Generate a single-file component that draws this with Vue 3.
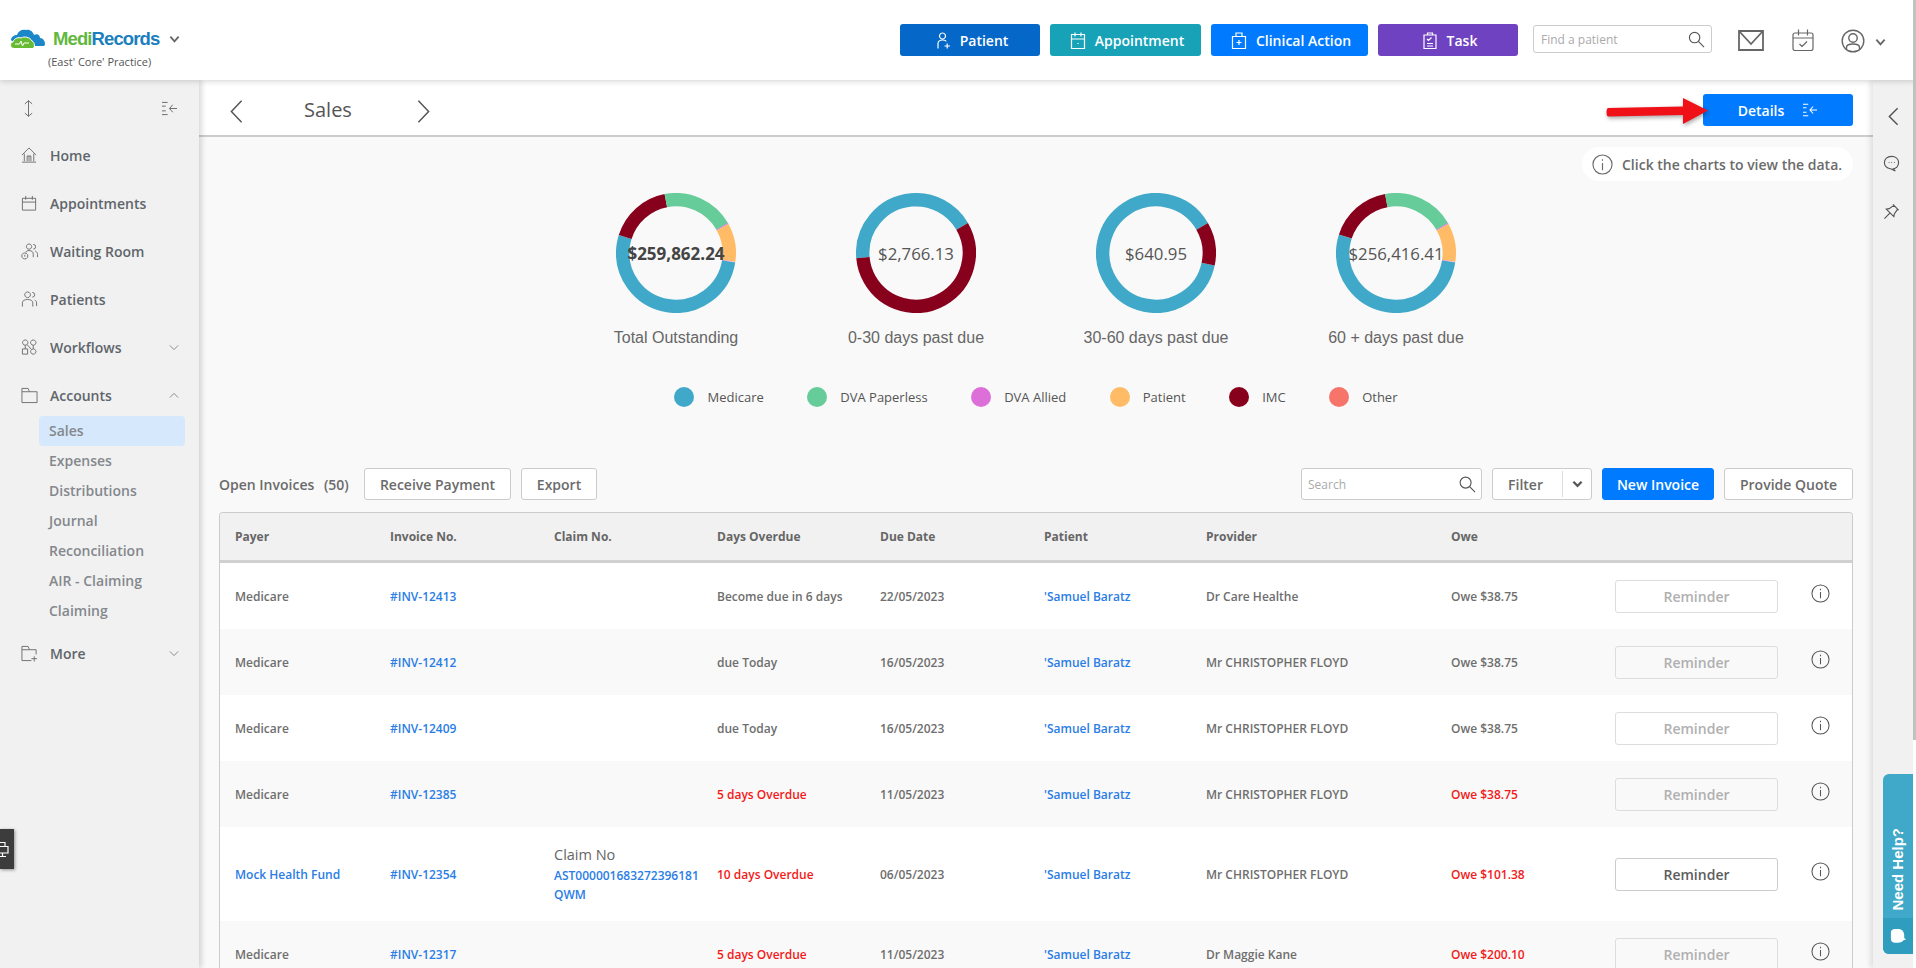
<script setup>
const nav = [
  { label: 'Home', d: 'M1 8.500 8.500 1 16 8.500M3.500 7V15M13.500 7V15M1 16H16M6.500 15V9.500H10.500V15M8.500 9.500V15' },
  { label: 'Appointments', d: 'M1.500 3.500H15.500V16H1.500ZM1.500 7.500H15.500M5 1V5M12 1V5' },
  { label: 'Waiting Room', d: 'M8.500 1a2.800 2.800 0 1 1-.01 0M13 1.500a2.500 2.500 0 0 1 0 5M5 10C5.500 8.500 7 8 8.500 8 11.500 8 13 9.500 13 12V15M15 8.500C16.500 9 17.500 10.500 17.500 12V15M4 10.500a3.200 3.200 0 1 1-.01 0M4 12.500V14.500' },
  { label: 'Patients', d: 'M7 1a3 3 0 1 1-.01 0M12 1.500a2.500 2.500 0 0 1 0 5M1.500 16.500V12.500C1.500 10 4 9 7 9S12.500 10 12.500 12.500V16.500M14.500 9.500C15.500 10 16.500 11 16.500 12.500V16' },
  { label: 'Workflows', d: 'M4.500 1a2.800 2.800 0 1 1-.01 0M13 1a2.800 2.800 0 1 1-.01 0M1.500 10.500H7V16H1.500ZM13 10.500a2.800 2.800 0 1 1-.01 0M4.500 6.600V10.500M13 6.600V10.500M6.500 6 11 11', chevron: 'down' },
  { label: 'Accounts', d: 'M1 16.500V1.500H7.500L9 5H17V16.500ZM1 5H9', chevron: 'up' },
]
const subnav = ['Sales', 'Expenses', 'Distributions', 'Journal', 'Reconciliation', 'AIR - Claiming', 'Claiming']

function segs(list) {
  return list.map(([from, to, color]) => ({ len: to - from, rot: from - 90, color }))
}
const blue = '#40a8c8', red = '#87001c', green = '#66cc99', orange = '#ffbb66', pink = '#dd70d8'
const charts = [
  { value: '$259,862.24', label: 'Total Outstanding', bold: true, segs: segs([[99, 287.5, blue], [287.5, 349, red], [349, 420, green], [60, 61, pink], [61, 98.500, orange], [98.500, 99, pink]]) },
  { value: '$2,766.13', label: '0-30 days past due', segs: segs([[265, 420, blue], [60, 265, red]]) },
  { value: '$640.95', label: '30-60 days past due', segs: segs([[102, 420, blue], [60, 102, red]]) },
  { value: '$256,416.41', label: '60 + days past due', segs: segs([[99, 288, blue], [288, 349.500, red], [349.500, 420, green], [60, 61, pink], [61, 98.500, orange], [98.500, 99, pink]]) },
]
const legend = [
  ['Medicare', blue], ['DVA Paperless', green], ['DVA Allied', pink],
  ['Patient', orange], ['IMC', red], ['Other', '#f6746a'],
]
const cols = ['Payer', 'Invoice No.', 'Claim No.', 'Days Overdue', 'Due Date', 'Patient', 'Provider', 'Owe']
const rows = [
  { payer: 'Medicare', inv: '#INV-12413', days: 'Become due in 6 days', date: '22/05/2023', prov: 'Dr Care Healthe', owe: 'Owe $38.75' },
  { payer: 'Medicare', inv: '#INV-12412', days: 'due Today', date: '16/05/2023', prov: 'Mr CHRISTOPHER FLOYD', owe: 'Owe $38.75' },
  { payer: 'Medicare', inv: '#INV-12409', days: 'due Today', date: '16/05/2023', prov: 'Mr CHRISTOPHER FLOYD', owe: 'Owe $38.75' },
  { payer: 'Medicare', inv: '#INV-12385', days: '5 days Overdue', late: true, date: '11/05/2023', prov: 'Mr CHRISTOPHER FLOYD', owe: 'Owe $38.75' },
  { payer: 'Mock Health Fund', link: true, inv: '#INV-12354', claim: 'AST000001683272396181QWM', days: '10 days Overdue', late: true, date: '06/05/2023', prov: 'Mr CHRISTOPHER FLOYD', owe: 'Owe $101.38', active: true },
  { payer: 'Medicare', inv: '#INV-12317', days: '5 days Overdue', late: true, date: '11/05/2023', prov: 'Dr Maggie Kane', owe: 'Owe $200.10' },
]
</script>

<template>
  <div class="app">
    <header class="top">
      <div class="brand">
        <div class="brand-row">
          <svg class="logo" viewBox="0 0 36 20" width="36" height="20">
            <path class="lg-b" d="M1 11C1 8 4 6 7 6 8 2 12 0 16 1 20 0 23 3 24 6 28 4 30 7 30 9 33 9 35 12 35 15 35 16.500 34 17 33 17H20L3 13Z" />
            <path class="lg-g" d="M2 19C0 18 0 13 3 13 4 9 9 8 11 9 14 7 20 8 22 12 25 13 25 19 23 19.500H4Z" />
            <path class="lg-w" d="M5 15H9.500L11 12 12.500 17 14 14H19" />
          </svg>
          <span class="brand-name"><span class="g">Medi</span><span class="b">Records</span></span>
          <svg class="brand-chev" viewBox="0 0 12 8" width="11" height="8"><path d="M1.500 1.500 6 6.500 10.500 1.500" /></svg>
        </div>
        <div class="practice">(East' Core' Practice)</div>
      </div>
      <div class="top-actions">
        <button class="act c1">
          <svg viewBox="0 0 16 18" width="16" height="19"><path d="M7.500 1.500a3 3 0 1 1-.01 0M3 17V12C3 10 5 8.500 7.500 8.500S11 9.500 11 10M9.500 14.500H15M12.200 12V17" /></svg>
          Patient
        </button>
        <button class="act c2">
          <svg viewBox="0 0 16 18" width="16" height="19"><path d="M1.500 3H14.500V17H1.500ZM1.500 7.500H14.500M5 1V5M11 1V5" /><path d="M8 11.500v1" /></svg>
          Appointment
        </button>
        <button class="act c3">
          <svg viewBox="0 0 16 18" width="16" height="19"><path d="M1.500 5H14.500V17H1.500ZM5 5V1.500H11V5M8 8.500V13.500M5.500 11H10.500" /></svg>
          Clinical Action
        </button>
        <button class="act c4">
          <svg viewBox="0 0 16 18" width="16" height="19"><path d="M2 3.500H14V17H2ZM5.500 3.500V1.500H10.500V3.500M5 7.500 6.500 9 9.500 6M5 12H11M5 14.500H11" /></svg>
          Task
        </button>
        <div class="find">
          <span>Find a patient</span>
          <svg viewBox="0 0 18 18" width="17" height="17"><circle cx="7" cy="7" r="5.500" /><path d="M11 11 17 17" /></svg>
        </div>
        <svg class="t-ic mail" viewBox="0 0 26 21" width="26" height="21"><path d="M1 1H25V20H1ZM1 1 13 14 25 1" /></svg>
        <svg class="t-ic cal" viewBox="0 0 22 22" width="22" height="22"><path d="M3 4H19C20.200 4 21 4.800 21 6V19.500C21 20.500 20.200 21.500 19 21.500H3C1.800 21.500 1 20.500 1 19.500V6C1 4.800 1.800 4 3 4ZM1 9H21M6.500 .5V6.500M15.500 .5V6.500M7.500 15 10 17.500 15 12.500" /></svg>
        <svg class="t-ic usr" viewBox="0 0 24 24" width="24" height="24"><circle cx="12" cy="12" r="10.800" /><circle cx="12" cy="9" r="4.200" /><path d="M5.500 20V18.500C5.500 16 8 15 12 15S18.500 16 18.500 18.500V20" /></svg>
        <svg class="usr-chev" viewBox="0 0 12 8" width="11" height="8"><path d="M1.500 1.500 6 6.500 10.500 1.500" /></svg>
      </div>
    </header>

    <div class="body-row">
      <aside class="side">
        <div class="side-tools">
          <svg viewBox="0 0 12 20" width="11" height="19"><path d="M6 1.500V18.500M2 5 6 1.500 10 5M2 15 6 18.500 10 15" /></svg>
          <svg viewBox="0 0 18 16" width="17" height="15"><path d="M1 1.500H7M1 5.500H5M1 10.500H5M1 14.500H7M17 8H9M12.500 4 9 8 12.500 12" /></svg>
        </div>
        <a v-for="n in nav" :key="n.label" class="nav" :class="{ open: n.chevron === 'up' }">
          <svg class="nav-ic" viewBox="0 0 18 18" width="17" height="17"><path :d="n.d" /></svg>
          <span>{{ n.label }}</span>
          <svg v-if="n.chevron" class="nav-chev" :class="n.chevron" viewBox="0 0 12 8" width="10" height="7"><path d="M1 1.500 6 6.500 11 1.500" /></svg>
        </a>
        <div class="sub">
          <a v-for="(s, i) in subnav" :key="s" class="sub-item" :class="{ on: i === 0 }">{{ s }}</a>
        </div>
        <a class="nav">
          <svg class="nav-ic" viewBox="0 0 18 18" width="17" height="17"><path d="M11 16.500H1V1.500H7.500L9 5H16V10M1 5H9M14 12V17.500M11 14.500H17" /></svg>
          <span>More</span>
          <svg class="nav-chev down" viewBox="0 0 12 8" width="10" height="7"><path d="M1 1.500 6 6.500 11 1.500" /></svg>
        </a>
      </aside>

      <main class="main">
        <div class="bar">
          <svg class="bar-chev" viewBox="0 0 14 26" width="13" height="25"><path d="M12.500 1.500 1.500 13 12.500 24.500" /></svg>
          <h1>Sales</h1>
          <svg class="bar-chev" viewBox="0 0 14 26" width="13" height="25"><path d="M1.500 1.500 12.500 13 1.500 24.500" /></svg>
          <button class="details">
            Details
            <svg viewBox="0 0 18 16" width="16" height="14"><path d="M1 1.500H7M1 5.500H5M1 10.500H5M1 14.500H7M17 8H9M12.500 4 9 8 12.500 12" /></svg>
          </button>
          <svg class="arrow" viewBox="0 0 104 28" width="104" height="28"><path d="M3 11 78 9.500V1L103 13.500 78 27V18L3 19.500C1 19 1 11.500 3 11Z" /></svg>
        </div>

        <div class="content">
          <div class="tip-row">
            <div class="tip">
              <svg viewBox="0 0 22 22" width="21" height="21"><circle cx="11" cy="11" r="10" /><path d="M11 9.500V17M11 5.500V7" /></svg>
              Click the charts to view the data.
            </div>
          </div>

          <div class="charts">
            <div v-for="c in charts" :key="c.label" class="chart">
              <div class="donut">
                <svg viewBox="0 0 120 120" width="120" height="120">
                  <circle v-for="(s, i) in c.segs" :key="i" cx="60" cy="60" r="53.300" pathLength="360" :style="{ stroke: s.color }" :stroke-dasharray="`${s.len} 360`" :transform="`rotate(${s.rot} 60 60)`" />
                </svg>
                <span class="d-val" :class="{ strong: c.bold }">{{ c.value }}</span>
              </div>
              <div class="d-label">{{ c.label }}</div>
            </div>
          </div>

          <div class="legend">
            <div v-for="l in legend" :key="l[0]" class="lg">
              <i :style="{ background: l[1] }"></i>{{ l[0] }}
            </div>
          </div>

          <div class="toolbar">
            <span class="count">Open Invoices <span class="n">(50)</span></span>
            <button class="btn rp">Receive Payment</button>
            <button class="btn ex">Export</button>
            <div class="grow"></div>
            <div class="search">
              <span>Search</span>
              <svg viewBox="0 0 18 18" width="17" height="17"><circle cx="7" cy="7" r="5.800" /><path d="M11 11 17 17" /></svg>
            </div>
            <div class="filter">
              <span>Filter</span>
              <i></i>
              <svg viewBox="0 0 12 8" width="11" height="8"><path d="M1.500 1.500 6 6 10.500 1.500" /></svg>
            </div>
            <button class="btn new">New Invoice</button>
            <button class="btn pq">Provide Quote</button>
          </div>

          <div class="table">
            <div class="tr head">
              <div v-for="c in cols" :key="c">{{ c }}</div>
            </div>
            <div v-for="r in rows" :key="r.inv" class="tr" :class="{ big: r.claim }">
              <div :class="{ link: r.link }">{{ r.payer }}</div>
              <div class="link">{{ r.inv }}</div>
              <div class="claim">
                <template v-if="r.claim">
                  <div class="claim-t">Claim No</div>
                  <div class="link claim-v">{{ r.claim }}</div>
                </template>
              </div>
              <div :class="{ late: r.late }">{{ r.days }}</div>
              <div>{{ r.date }}</div>
              <div class="link">'Samuel Baratz</div>
              <div>{{ r.prov }}</div>
              <div :class="{ late: r.late }">{{ r.owe }}</div>
              <div><button class="remind" :class="{ active: r.active }">Reminder</button></div>
              <div class="info">
                <svg viewBox="0 0 20 20" width="19" height="19"><circle cx="10" cy="10" r="9" /><path d="M10 8.500V15M10 5V6.500" /></svg>
              </div>
            </div>
          </div>
        </div>
      </main>

      <aside class="rail">
        <svg viewBox="0 0 12 20" width="11" height="19"><path d="M10.500 1 1.500 10 10.500 19" /></svg>
        <svg viewBox="0 0 18 18" width="17" height="17"><path d="M9 1.500C13.500 1.500 16.500 4 16.500 8S13.500 14.500 11 14.500L13 17 8 14.500C4 14 1.500 12 1.500 8S4.500 1.500 9 1.500ZM6 8H6.800M8.800 8H9.600M11.600 8H12.400" /></svg>
        <svg viewBox="0 0 18 18" width="17" height="17"><path d="M10.500 1.500 16.500 7.500M11.500 2.500 6.500 6 3.500 6.500 11.500 14.500 12 11.500 15.500 6.500M7.500 10.500 1.500 16.500" /></svg>
        <div class="help">
          <div class="help-t"><span>Need Help?</span></div>
          <div class="help-b">
            <svg viewBox="0 0 18 18" width="16" height="16"><path d="M9 1C13.500 1 16 4 16 8.500V11L18 13.500 15.500 13.500C14 15.500 12 16.500 9 16.500H5C2.500 16.500 1 15 1 12.500V5C1 2.500 3 1 5.500 1Z" /></svg>
          </div>
        </div>
      </aside>
    </div>

    <div class="dark-tab">
      <svg viewBox="0 0 9 15" width="9" height="15"><path d="M-4 8V.5H5V4.500M-3 4.500H8V11H-3ZM2.500 11V14M-1 14.500H6" /></svg>
    </div>
    <div class="edge"><i></i></div>
  </div>
</template>

<style>
html, body { margin: 0; background: #fff; overflow: hidden; }
</style>

<style scoped>
.app { position: relative; width: 1916px; height: 968px; overflow: hidden; font-family: "Open Sans", "Noto Sans", sans-serif; color: #666; background: #fff; }
svg { display: block; flex: none; }
svg path, svg circle { fill: none; stroke: currentColor; stroke-width: 1.2; }
.logo path.lg-b { fill: #1b87c9; stroke: none; }
.logo path.lg-g { fill: #66bb33; stroke: #fff; stroke-width: 1; }
.logo path.lg-w { stroke: #fff; stroke-width: 1; }
button { font-family: inherit; cursor: pointer; }

.top { position: relative; z-index: 3; height: 80px; box-sizing: border-box; display: flex; justify-content: space-between; background: #fff; box-shadow: 0 1px 6px rgba(0,0,0,.18); padding: 24px 30px 0 10px; }
.brand { padding-top: 5px; }
.brand-row { display: flex; align-items: center; }
.brand-name { margin-left: 7px; font: bold 18.500px "Liberation Sans", sans-serif; letter-spacing: -.9px; line-height: 20px; }
.g { color: #62b83e; }
.b { color: #1c7fbd; }
.brand-chev { margin-left: 10px; color: #666; }
.brand-chev path, .usr-chev path { stroke-width: 2; }
.practice { margin: 6px 0 0 38px; font-size: 11px; line-height: 14px; color: #555; }

.top-actions { display: flex; align-items: flex-start; }
.act { height: 32px; border: 0; border-radius: 3px; color: #fff; font-size: 14px; font-weight: 600; display: flex; align-items: center; justify-content: center; gap: 9px; padding: 0 0 0 3px; margin-right: 10px; }
.c1 { width: 140px; background: #0567c8; }
.c2 { width: 151px; background: #17a2b8; }
.c3 { width: 157px; background: #007bff; }
.c4 { width: 140px; background: #6f42c1; margin-right: 15px; }
.find { width: 179px; height: 28px; margin-top: 1px; box-sizing: border-box; border: 1px solid #ccc; border-radius: 3px; display: flex; align-items: center; justify-content: space-between; padding: 0 6px 0 7px; font-size: 12px; color: #aaa; }
.find svg { color: #555; }
.t-ic { color: #666; }
.mail { margin: 6px 28px 0 26px; }
.mail path { stroke-width: 1.800; }
.cal { margin: 5px 27px 0 0; }
.usr { margin-top: 5px; }
.usr circle, .usr path { stroke-width: 1.400; }
.usr-chev { margin: 14px 0 0 10px; color: #666; }

.body-row { display: flex; height: 888px; }
.side { position: relative; z-index: 2; width: 199px; flex: none; padding-top: 3px; box-sizing: border-box; background: #f1f1f1; box-shadow: 3px 0 5px rgba(0,0,0,.14); }
.side-tools { height: 48px; padding: 2px 21px 0 23px; box-sizing: border-box; display: flex; align-items: center; justify-content: space-between; color: #666; }
.side-tools path { stroke-width: 1; }
.nav { height: 48px; display: flex; align-items: center; padding: 0 20px 0 21px; font-size: 14px; font-weight: 600; color: #60656b; box-sizing: border-box; }
.nav-ic { margin-right: 12px; color: #6d6d6d; }
.nav-ic path { stroke-width: 1; }
.nav-chev { margin-left: auto; color: #777; }
.nav-chev path { stroke-width: 1; }
.nav-chev.up { transform: rotate(180deg); }
.sub { margin: -3px 0 3px; }
.sub-item { display: block; height: 30px; line-height: 30px; margin: 0 14px 0 39px; padding-left: 10px; font-size: 14px; font-weight: 600; color: #84888d; border-radius: 4px; }
.sub-item.on { background: #d6e8fb; }

.main { flex: 1; min-width: 0; background: #f9f9f9; display: flex; flex-direction: column; overflow: hidden; }
.bar { position: relative; height: 57px; flex: none; box-sizing: border-box; background: #fff; border-bottom: 2px solid #ccc; padding: 0 20px 0 31px; display: flex; align-items: center; color: #555; }
.bar-chev { width: 13px; height: 25px; margin-top: 7px; }
.bar-chev path { stroke-width: 1.600; }
.bar h1 { margin: 3px 64px 0 61px; font-size: 20px; font-weight: 500; color: #555; width: 49px; white-space: nowrap; }
.details { margin-left: auto; margin-top: 5px; width: 150px; height: 32px; border: 0; border-radius: 3px; background: #007bff; color: #fff; font-size: 14px; font-weight: 600; display: flex; align-items: center; justify-content: center; gap: 18px; }
.arrow { position: absolute; right: 164px; top: 17px; filter: drop-shadow(1px 2px 2px rgba(0,0,0,.35)); }
.arrow path { fill: #f01018; stroke: none; }

.content { padding: 10px 20px 0; }
.tip-row { display: flex; justify-content: flex-end; }
.tip { height: 34px; width: 271px; box-sizing: border-box; background: #fff; border-radius: 17px; display: flex; align-items: center; gap: 9px; padding-left: 10px; font-size: 14px; font-weight: 600; color: #6b6b6b; white-space: nowrap; }
.charts { display: flex; justify-content: center; margin-top: 12px; }
.chart { width: 240px; text-align: center; }
.donut { position: relative; width: 120px; height: 120px; margin: 0 auto; }
.donut svg circle { stroke-width: 13.400; }
.d-val { position: absolute; left: -20px; right: -20px; top: 0; bottom: 0; display: flex; align-items: center; justify-content: center; font-size: 16.800px; color: #555; }
.d-val.strong { font-weight: 700; font-size: 17px; color: #444; }
.d-label { margin-top: 15px; line-height: 20px; font: 16px/20px "Liberation Sans", Arial, sans-serif; color: #666; }
.legend { display: flex; justify-content: center; gap: 43.500px; margin-top: 39px; height: 20px; }
.lg { display: flex; align-items: center; gap: 13px; font-size: 13px; color: #555; }
.lg i { width: 20px; height: 20px; border-radius: 50%; }

.toolbar { display: flex; align-items: center; margin-top: 61px; height: 32px; font-size: 14px; }
.count { font-weight: 600; font-size: 14px; white-space: nowrap; margin-right: 15px; color: #6b6b6b; width: 130px; }
.count .n { margin-left: 6px; }
.btn { height: 32px; box-sizing: border-box; border: 1px solid #ccc; background: #fff; border-radius: 3px; color: #6b6b6b; font-size: 14px; font-weight: 600; padding: 0; }
.rp { width: 147px; margin-right: 10px; }
.ex { width: 76px; }
.grow { flex: 1; }
.search { width: 181px; height: 32px; box-sizing: border-box; border: 1px solid #ccc; background: #fff; border-radius: 3px; display: flex; align-items: center; justify-content: space-between; padding: 0 5px 0 6px; font-size: 12px; color: #aaa; }
.search svg { color: #555; }
.filter { width: 100px; height: 32px; box-sizing: border-box; margin-left: 10px; border: 1px solid #ccc; background: #fff; border-radius: 3px; display: flex; align-items: center; color: #6b6b6b; font-weight: 600; }
.filter span { width: 65px; text-align: center; margin-right: 4px; }
.filter i { width: 1px; height: 26px; background: #ddd; }
.filter svg { margin-left: 9px; color: #555; }
.filter svg path { stroke-width: 2.400; }
.new { width: 112px; margin: 0 10px; background: #007bff; border-color: #007bff; color: #fff; }
.pq { width: 129px; }

.table { margin-top: 12px; border: 1px solid #ccc; border-bottom: 0; border-radius: 4px 4px 0 0; background: #fff; }
.tr { display: grid; grid-template-columns: 155px 164px 163px 163px 164px 162px 245px 164px 163px 1fr; padding-left: 15px; height: 66px; align-items: center; font-size: 12px; font-weight: 600; color: #6e6e6e; white-space: nowrap; }
.tr:nth-child(odd) { background: #f9f9f9; }
.tr.head { height: 50px; box-sizing: border-box; background: #f1f1f1; border-bottom: 3px solid #d0d0d0; font-weight: 700; color: #666; border-radius: 4px 4px 0 0; }
.tr.big { height: 94px; }
.link { color: #2a7de6; }
.late { color: #f41a1a; }
.claim-t { font-size: 14.500px; font-weight: 500; line-height: 20px; margin-bottom: 1px; color: #666; }
.claim-v { width: 150px; white-space: normal; word-break: break-all; line-height: 19px; }
.remind { width: 163px; height: 33px; box-sizing: border-box; background: transparent; border: 1px solid #ddd; border-radius: 3px; color: #b0b0b0; font-size: 14px; font-weight: 600; padding: 0; }
.remind.active { background: #fff; border-color: #ccc; color: #5c5c5c; }
.info { display: flex; justify-content: flex-end; padding-right: 22px; margin-top: -5px; color: #555; }
.info path, .info circle { stroke-width: 1.100; }

.rail { position: relative; z-index: 2; width: 43px; flex: none; box-sizing: border-box; background: #f1f1f1; box-shadow: -3px 0 5px rgba(0,0,0,.1); padding-left: 15px; color: #555; }
.rail > svg:nth-child(1) { margin-top: 27px; }
.rail > svg:nth-child(1) path { stroke-width: 1.600; }
.rail > svg:nth-child(2) { margin-top: 29px; margin-left: -5px; }
.rail > svg:nth-child(3) { margin-top: 31px; margin-left: -5px; }
.help { position: absolute; left: 10px; top: 694px; width: 30px; height: 180px; border-radius: 6px 0 0 6px; overflow: hidden; background: #40a8c8; display: flex; flex-direction: column; }
.help-t { flex: 1; position: relative; }
.help-t span { position: absolute; left: 50%; bottom: 7px; transform: translateX(-54%) rotate(180deg); writing-mode: vertical-rl; font: bold 15px "Liberation Sans", sans-serif; color: #fff; white-space: nowrap; }
.help-b { height: 36px; background: #2f9dbd; display: flex; align-items: center; justify-content: center; }
.help-b path { fill: #fff; stroke: none; }

.dark-tab { position: absolute; z-index: 4; left: 0; top: 829px; width: 14px; height: 40px; background: #3c3c3c; box-shadow: 1px 1px 3px rgba(0,0,0,.4); color: #fff; display: flex; align-items: center; overflow: hidden; }
.dark-tab svg { overflow: visible; }
.edge { position: absolute; z-index: 5; right: 0; top: 0; bottom: 0; width: 3px; background: #fff; }
.edge i { display: block; height: 740px; background: #c1c1c1; }
</style>
